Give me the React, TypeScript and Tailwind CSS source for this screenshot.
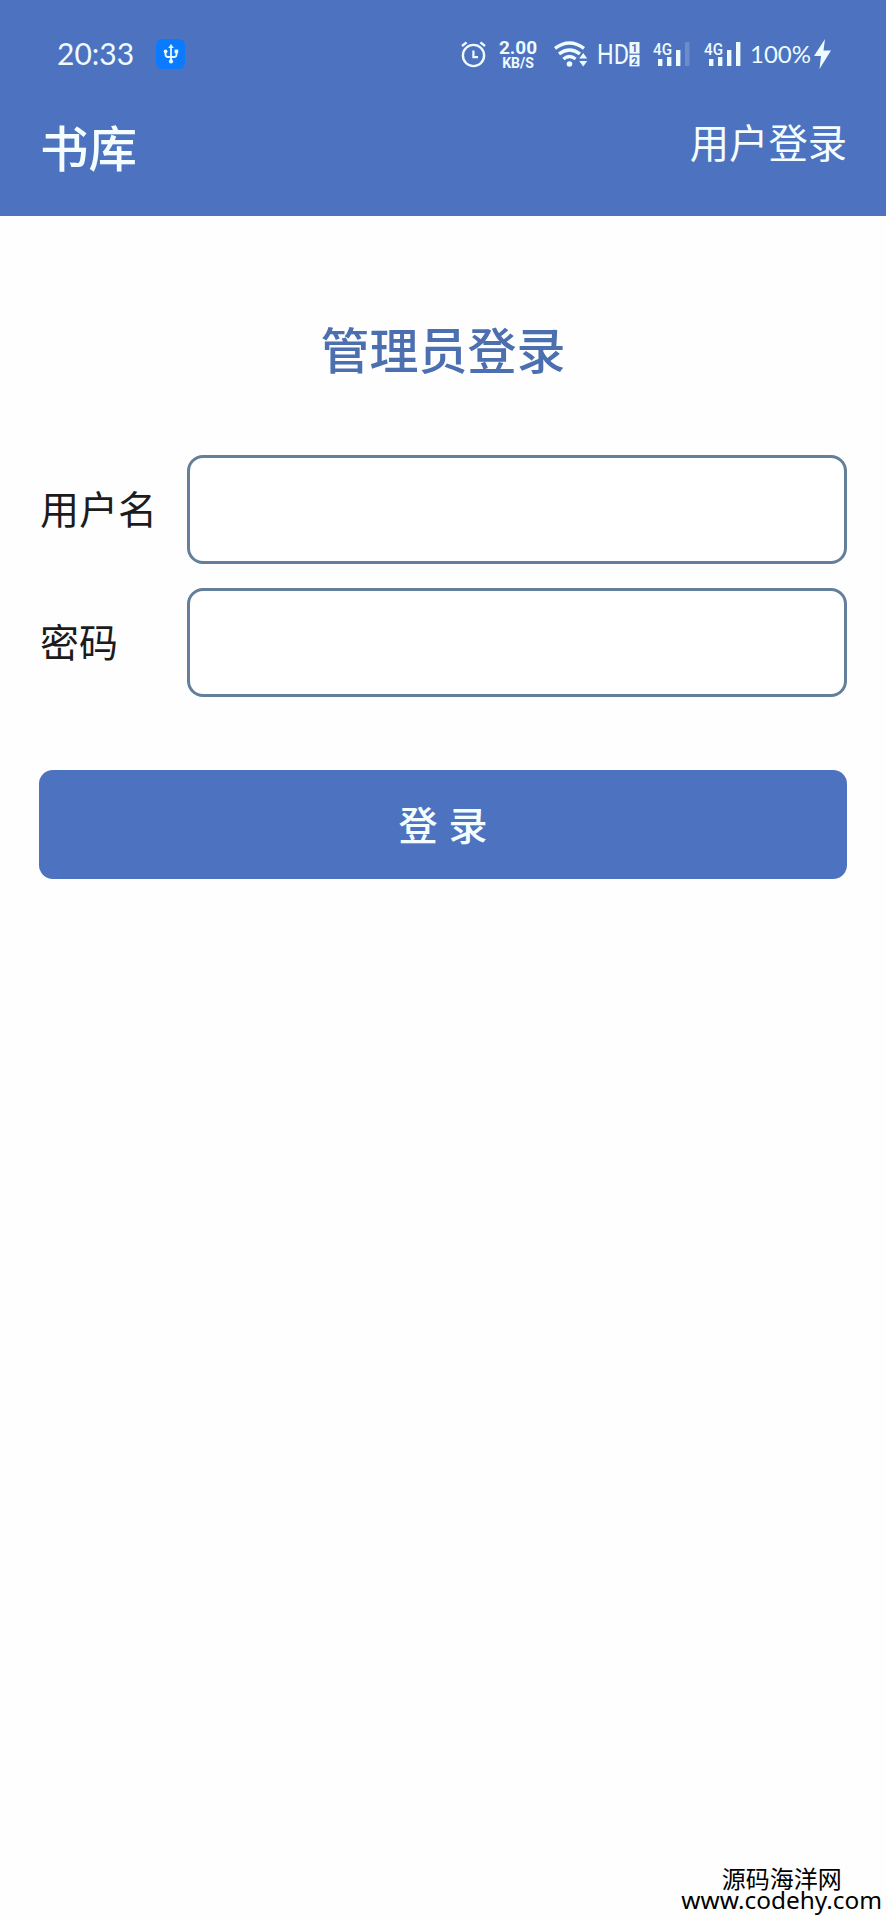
import { useState } from 'react';

interface SignalProps {
  level: number;
}

const bars = [
  { x: 5, y: 18, h: 7 },
  { x: 14, y: 16, h: 9 },
  { x: 23, y: 9, h: 16 },
  { x: 32, y: 1, h: 24 },
];

function Signal({ level }: SignalProps) {
  return (
    <svg width="38" height="26" viewBox="0 0 38 26" className="overflow-visible">
      <text x="0" y="13.500" fontSize="16" fontWeight="500" fontFamily="Roboto, sans-serif" fill="currentColor" textLength="19" lengthAdjust="spacingAndGlyphs">
        4G
      </text>
      {bars.map((bar, i) => (
        <rect key={bar.x} x={bar.x} y={bar.y} width="4.400" height={bar.h} fill="currentColor" opacity={i < level ? 1 : 0.2} />
      ))}
    </svg>
  );
}

function UsbBadge() {
  return (
    <div className="ml-6 flex h-[30px] w-[29px] items-center justify-center rounded-md bg-[#0a7bff]">
      <svg width="16" height="20" viewBox="0 0 16 20" fill="none" stroke="#e4fbff" strokeWidth="1.8">
        <path d="M8 3v14M2.5 7v3.5q0 2.500 2.500 2.500H11q2.500 0 2.500-2.500V7" />
        <path d="M8 0l2.8 4H5.2z" fill="#e4fbff" stroke="none" />
        <circle cx="8" cy="17.4" r="2.1" fill="#e4fbff" stroke="none" />
        <circle cx="2.6" cy="7.4" r="1.9" fill="#e4fbff" stroke="none" />
        <rect x="11.6" y="5.6" width="3.6" height="3.6" fill="#e4fbff" stroke="none" />
      </svg>
    </div>
  );
}

function AlarmIcon() {
  return (
    <svg width="26" height="28" viewBox="0 0 26 28" fill="none" stroke="currentColor" strokeWidth="2.4">
      <circle cx="12.5" cy="15.5" r="10.6" />
      <path d="M12.4 10.500v6.600h4.600" strokeWidth="2.2" />
      <path d="M1 6L5.600 2.400M24 6L19.400 2.400" />
    </svg>
  );
}

function WifiIcon() {
  return (
    <svg width="34" height="27" viewBox="0 0 34 27" fill="none" stroke="currentColor" strokeWidth="3.4">
      <path d="M1 7.4Q15.5-3.2 30 7.4" />
      <path d="M5 12.8Q15.5 5 26 12.8" />
      <path d="M9.4 18Q15.5 13.2 21.6 18" />
      <circle cx="15.5" cy="23" r="2.8" fill="currentColor" stroke="none" />
      <path d="M25.2 17.400l4-5.400 4 5.400zM25.2 20l4 5.400 4-5.400z" fill="currentColor" stroke="none" />
    </svg>
  );
}

function HdIcon() {
  return (
    <svg width="41" height="26" viewBox="0 0 41 26" fontFamily="Roboto, sans-serif" className="overflow-visible">
      <text x="-2" y="23" fontSize="27" textLength="32" lengthAdjust="spacingAndGlyphs" fill="currentColor">
        HD
      </text>
      <rect x="30.5" y="1" width="10" height="11.600" fill="currentColor" />
      <rect x="30.5" y="13.800" width="10" height="11.600" fill="currentColor" />
      <text x="35.5" y="10.700" fontSize="11" fontWeight="700" textAnchor="middle" fill="#4c72c0">1</text>
      <text x="35.5" y="23.600" fontSize="11" fontWeight="700" textAnchor="middle" fill="#4c72c0">2</text>
    </svg>
  );
}

function StatusBar() {
  return (
    <div className="flex h-[108px] items-center pl-[57px] pr-[55px] text-[#eefbff]">
      <span className="w-[75px] whitespace-nowrap pb-0.5 font-['Lato',sans-serif] text-[30px] leading-none">20:33</span>
      <UsbBadge />
      <div className="ml-auto flex items-center">
        <AlarmIcon />
        <div className="ml-[10px] flex w-[42px] flex-col items-center font-['Roboto',sans-serif] font-bold">
          <span className="text-[19px] leading-[17px]">2.00</span>
          <span className="text-[14px] leading-[14px]">KB/S</span>
        </div>
        <div className="ml-[15px]">
          <WifiIcon />
        </div>
        <div className="ml-[11px]">
          <HdIcon />
        </div>
        <div className="ml-[13px]">
          <Signal level={3} />
        </div>
        <div className="ml-[13px]">
          <Signal level={4} />
        </div>
        <span className="ml-[8px] w-[60px] whitespace-nowrap font-['Lato',sans-serif] text-[24px] leading-none">100%</span>
        <svg width="17" height="30" viewBox="0 0 17 30" className="ml-1">
          <path d="M11 0L0 17h7L5.500 30 17 11.500H9.500z" fill="currentColor" />
        </svg>
      </div>
    </div>
  );
}

interface FieldProps {
  label: string;
  type: string;
  value: string;
  onChange: (value: string) => void;
}

function Field({ label, type, value, onChange }: FieldProps) {
  return (
    <label className="flex items-center">
      <span className="w-[148px] shrink-0 pb-1 pl-px text-[39px] leading-none text-[#1c1c1c]">{label}</span>
      <input
        type={type}
        value={value}
        onChange={(e) => onChange(e.target.value)}
        className="h-[109px] w-[660px] rounded-2xl border-3 border-[#647f99] bg-white px-6 text-4xl outline-none"
      />
    </label>
  );
}

export default function App() {
  const [username, setUsername] = useState('');
  const [password, setPassword] = useState('');

  return (
    <div className="relative h-[1920px] w-[886px] overflow-hidden bg-[#fefefe] font-['Noto_Sans_CJK_SC',sans-serif]">
      <header className="h-[216px] bg-[#4c72c0] text-[#f4fdff]">
        <StatusBar />
        <div className="flex items-start justify-between pl-10 pr-[39px]">
          <h1 className="pt-[14px] text-[48.5px] font-medium leading-none">书库</h1>
          <span className="pt-[13px] text-[39.3px] leading-none">用户登录</span>
        </div>
      </header>

      <main className="px-[39px] pt-[107px]">
        <h2 className="text-center text-[49px] font-medium leading-none text-[#4c6fb0]">管理员登录</h2>
        <form className="pt-[83px]" onSubmit={(e) => e.preventDefault()}>
          <div className="flex flex-col gap-6">
            <Field label="用户名" type="text" value={username} onChange={setUsername} />
            <Field label="密码" type="password" value={password} onChange={setPassword} />
          </div>
          <button
            type="submit"
            className="mt-[73px] h-[109px] w-full rounded-[14px] bg-[#4c72c0] pb-0.5 text-[39px] font-medium leading-none text-[#f4fdff] [word-spacing:2px]"
          >
            登 录
          </button>
        </form>
      </main>

      {/* site mark in the page corner */}
      <div className="absolute bottom-[9px] right-1 flex flex-col items-center text-black">
        <span className="text-[24px] leading-[22px]">源码海洋网</span>
        <span className="font-['Noto_Sans',sans-serif] text-[24.4px] leading-[22px]">www.codehy.com</span>
      </div>
    </div>
  );
}
